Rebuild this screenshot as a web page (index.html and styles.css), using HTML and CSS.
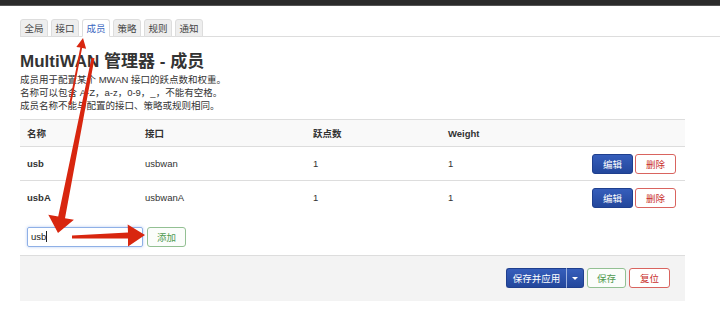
FILE: index.html
```html
<!DOCTYPE html>
<html lang="zh-CN">
<head>
    <meta charset="UTF-8">
    <title>MultiWAN 管理器 - 成员</title>
    <link rel="stylesheet" href="styles.css">
</head>
<body>
    <div class="topbar"></div>

    <div class="main">
        <ul class="tabs">
            <li>全局</li>
            <li>接口</li>
            <li class="active">成员</li>
            <li>策略</li>
            <li>规则</li>
            <li>通知</li>
        </ul>

        <h2 class="title">MultiWAN 管理器 - 成员</h2>
        <div class="desc">
            成员用于配置某个 MWAN 接口的跃点数和权重。<br>
            名称可以包含 A-Z，a-z，0-9，_，不能有空格。<br>
            成员名称不能与配置的接口、策略或规则相同。
        </div>

        <div class="section">
            <table class="members">
                <tr>
                    <th class="col-name">名称</th>
                    <th class="col-iface">接口</th>
                    <th class="col-metric">跃点数</th>
                    <th>Weight</th>
                    <th></th>
                </tr>
                <tr>
                    <td class="name">usb</td>
                    <td>usbwan</td>
                    <td>1</td>
                    <td>1</td>
                    <td class="actions">
                        <button class="btn btn-blue">编辑</button><button class="btn btn-red">删除</button>
                    </td>
                </tr>
                <tr>
                    <td class="name">usbA</td>
                    <td>usbwanA</td>
                    <td>1</td>
                    <td>1</td>
                    <td class="actions">
                        <button class="btn btn-blue">编辑</button><button class="btn btn-red">删除</button>
                    </td>
                </tr>
                <tr class="add-row">
                    <td colspan="5">
                        <div class="add-form">
                            <div class="fake-input">usb<span class="caret"></span></div>
                            <button class="btn btn-green">添加</button>
                        </div>
                    </td>
                </tr>
            </table>

            <div class="footer">
                <div class="split">
                    <button class="btn btn-blue split-main">保存并应用</button><button class="btn btn-blue split-drop"><span class="arrow-down"></span></button>
                </div>
                <button class="btn btn-green">保存</button>
                <button class="btn btn-red">复位</button>
            </div>
        </div>
    </div>

    <!-- annotation arrows drawn over the page -->
    <svg class="marks" width="720" height="329" viewBox="0 0 720 329">
        <polygon points="71,105 69,105 80.3,47.6 76.3,46.9 83,38 86.1,48.7 82.1,48" />
        <polygon points="94.5,58.3 91.5,57.7 58.2,216.4 48.3,214.8 58,233 73.9,219.8 65,218.3" />
        <polygon points="72,235.6 72,238.6 128,238.6 128,246.4 145,235 127.7,224.4 128,232.4" />
    </svg>
</body>
</html>
```

FILE: styles.css
```css
* {
    box-sizing: border-box;
}
body {
    margin: 0;
    background: #fff;
    font-family: "Liberation Sans", "Noto Sans CJK SC", sans-serif;
    font-size: 9.5px;
    color: #333;
}
.topbar {
    height: 6px;
    background: #2b2b2b;
    border-bottom: 1px solid #555;
}
.main {
    padding-left: 20px;
}
.tabs {
    display: flex;
    align-items: flex-end;
    list-style: none;
    margin: 12px 0 0 0;
    padding: 0;
    height: 19px;
    border-bottom: 1px solid #ddd;
}
.tabs li {
    height: 18px;
    line-height: 17px;
    padding: 0 3.5px;
    margin-right: 3px;
    margin-bottom: -1px;
    border: 1px solid #ddd;
    border-bottom: 1px solid #ddd;
    border-radius: 3px 3px 0 0;
    background: #eee;
    color: #444;
}
.tabs li.active {
    background: #fff;
    border-bottom-color: #fff;
    color: #3a66c0;
}
.title {
    margin: 15px 0 0 0;
    font-size: 17px;
    line-height: 20px;
    font-weight: bold;
    color: #333;
}
.desc {
    margin-top: 1px;
    line-height: 13px;
    color: #333;
}
.section {
    width: 665px;
    margin-top: 7px;
}
.members {
    width: 100%;
    border-collapse: collapse;
}
.members th {
    height: 27px;
    padding: 0 7px;
    text-align: left;
    font-weight: bold;
    background: #f9f9f9;
    border-top: 1px solid #ddd;
    border-bottom: 1px solid #ddd;
}
.members td {
    height: 34px;
    padding: 0 7px;
    border-bottom: 1px solid #ddd;
}
.col-name {
    width: 118px;
}
.col-iface {
    width: 168px;
}
.col-metric {
    width: 135px;
}
.members td.name {
    font-weight: bold;
}
.members td.actions {
    text-align: right;
    padding-right: 9px;
}
.members tr:nth-child(3) td {
    border-bottom: none;
}
.members .add-row td {
    height: 41px;
    padding: 12px 7px 8px 7px;
    border-bottom: 1px solid #ddd;
    vertical-align: top;
}
.add-form {
    display: flex;
    gap: 4px;
}
.fake-input {
    width: 116px;
    height: 20px;
    padding: 0 3px;
    line-height: 18px;
    border: 1px solid #8fb0e6;
    border-radius: 2px;
    box-shadow: 0 0 3px rgba(90, 140, 230, 0.45);
    color: #222;
}
.caret {
    display: inline-block;
    width: 1px;
    height: 11px;
    background: #222;
    vertical-align: -2px;
}
.btn {
    height: 20px;
    padding: 0 10px;
    font-family: inherit;
    font-size: 9.5px;
    border-radius: 3px;
    border: 1px solid #ccc;
    background: #fff;
    cursor: pointer;
}
.btn + .btn {
    margin-left: 2px;
}
.btn-blue {
    color: #fff;
    border-color: #1f3f8e;
    background: linear-gradient(#365ebb, #23479c);
}
.btn-red {
    color: #c9302c;
    border-color: #d9645f;
    background: #fff;
}
.btn-green {
    padding: 0 9px;
    color: #4f9a4f;
    border-color: #93c093;
    background: #fbfdfb;
}
.footer {
    display: flex;
    justify-content: flex-end;
    align-items: flex-start;
    gap: 3px;
    height: 45px;
    padding: 12px 15px 0 0;
    background: #f3f3f3;
}
.footer .btn + .btn {
    margin-left: 0;
}
.split {
    display: flex;
}
.split .btn + .btn {
    margin-left: 0;
}
.split-main {
    width: 61px;
    padding: 0;
    border-radius: 3px 0 0 3px;
    border-right: 1px solid #9fb3e0;
}
.split-drop {
    width: 17px;
    padding: 0;
    border-left: none;
    border-radius: 0 3px 3px 0;
}
.arrow-down {
    display: inline-block;
    border-left: 3px solid transparent;
    border-right: 3px solid transparent;
    border-top: 3px solid #fff;
    vertical-align: middle;
}
.marks {
    position: absolute;
    left: 0;
    top: 0;
    pointer-events: none;
}
.marks polygon {
    fill: #d8260f;
}
```
